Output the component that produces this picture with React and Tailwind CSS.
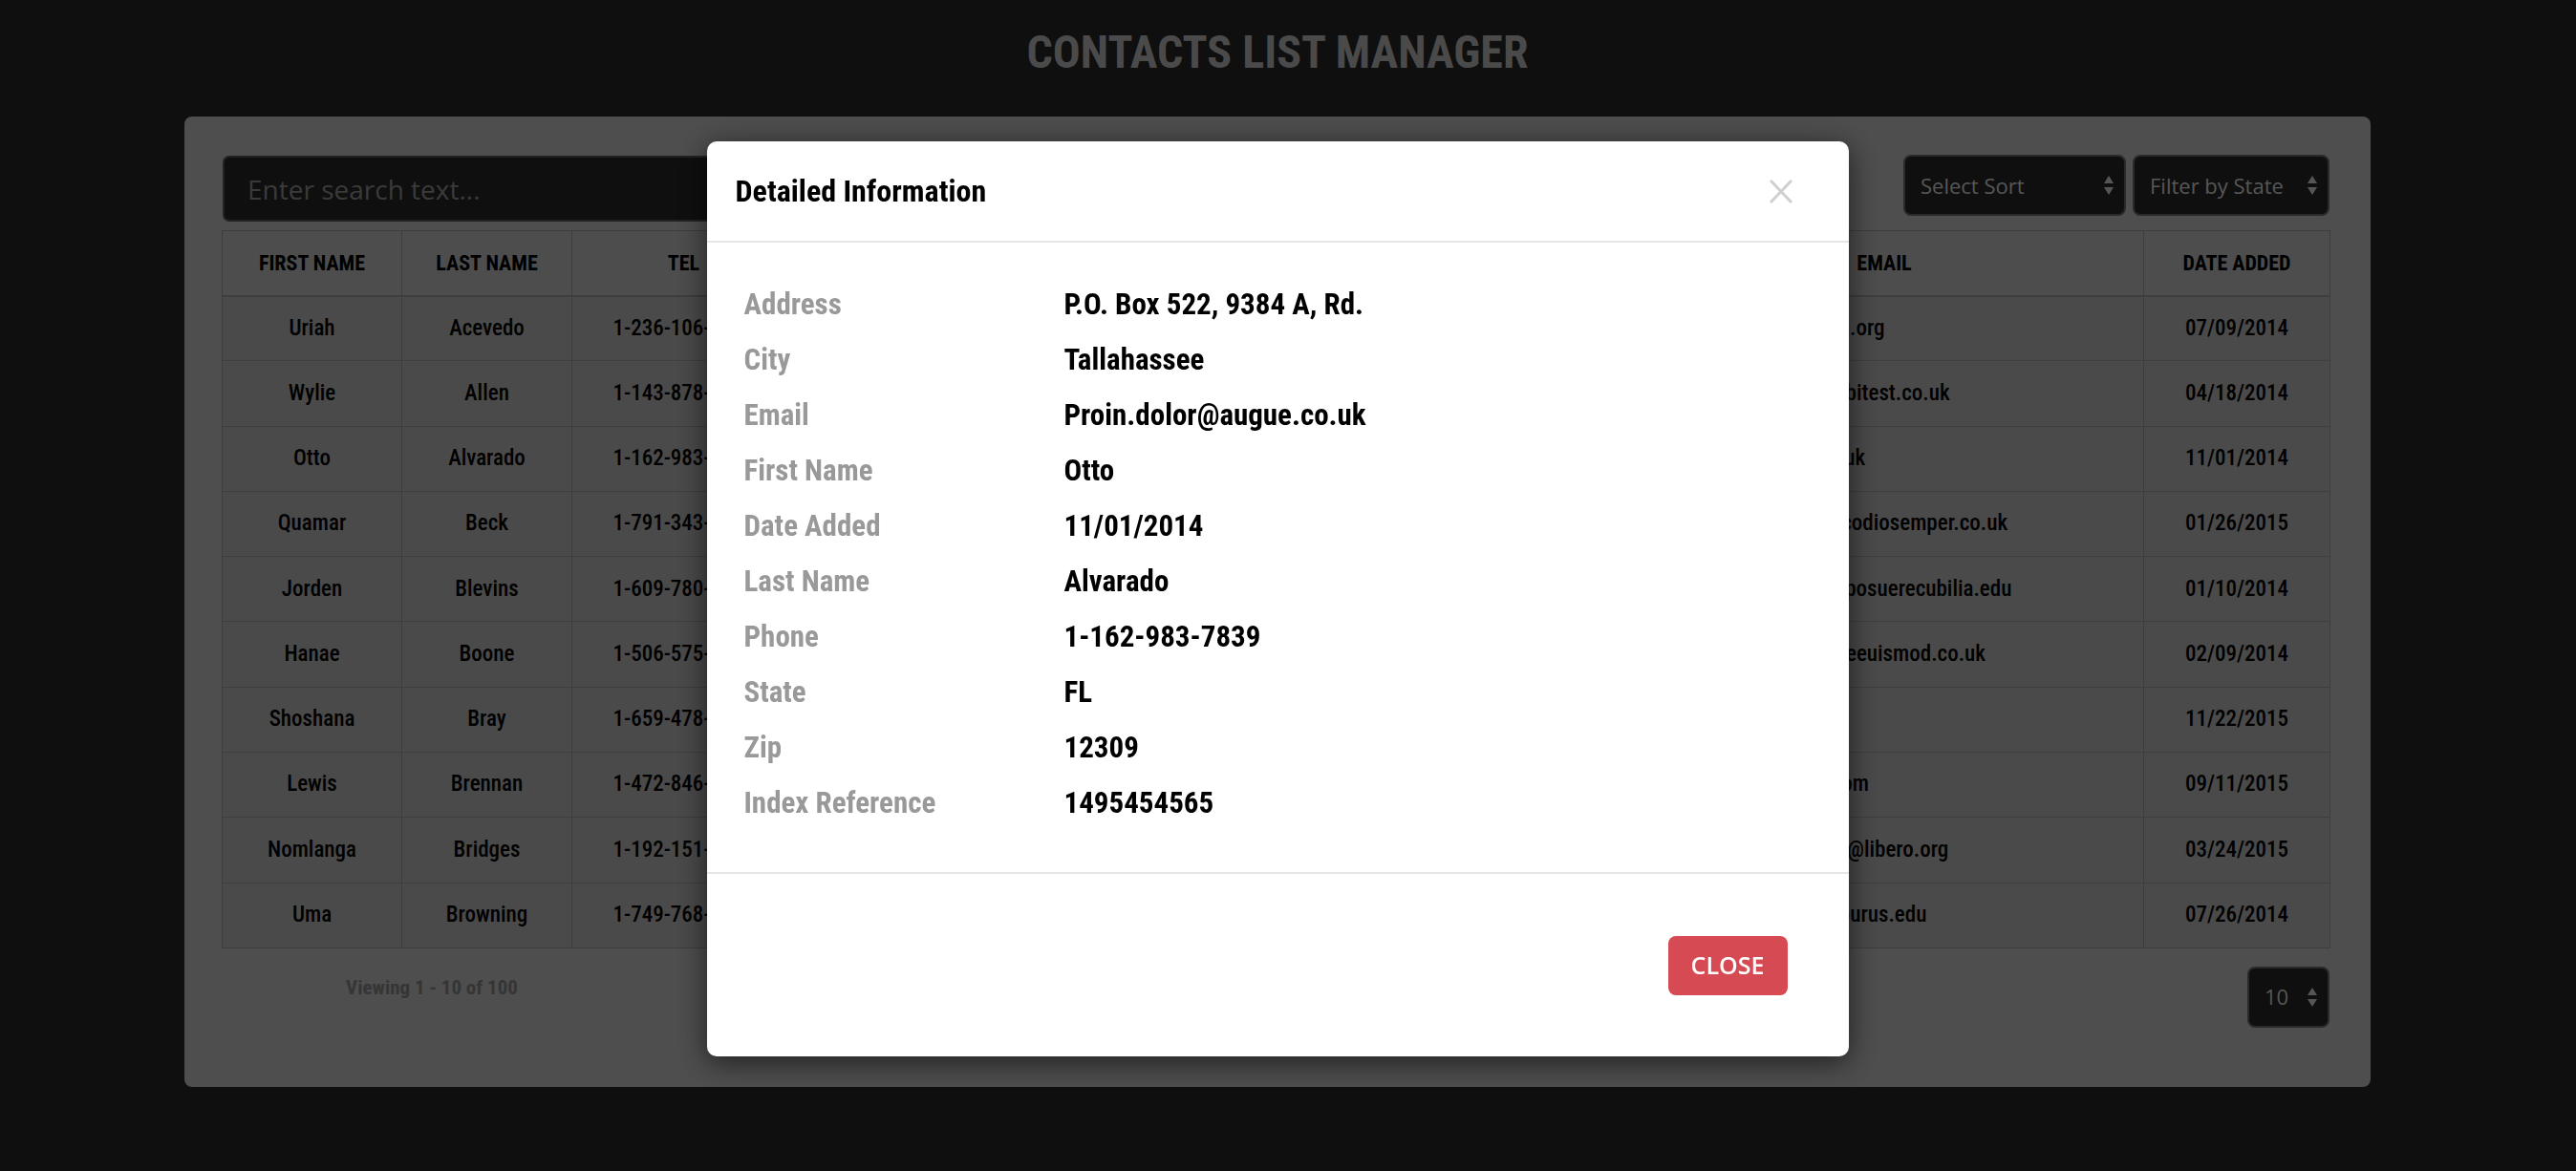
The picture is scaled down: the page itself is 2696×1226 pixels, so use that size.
import React from 'react';

const contacts = [
  { first: 'Uriah', last: 'Acevedo', tel: '1-236-106-2468', address: '8812 Sed Rd.', city: 'Topeka', state: 'KS', zip: '66403', email: 'dui.sit@Aeneanegestas.org', date: '07/09/2014' },
  { first: 'Wylie', last: 'Allen', tel: '1-143-878-0752', address: '4471 Mauris Ave', city: 'Augusta', state: 'GA', zip: '30907', email: 'Sed.malesuada.a@Morbitest.co.uk', date: '04/18/2014' },
  { first: 'Otto', last: 'Alvarado', tel: '1-162-983-7839', address: 'P.O. Box 522, 9384 A, Rd.', city: 'Tallahassee', state: 'FL', zip: '12309', email: 'Proin.dolor@augue.co.uk', date: '11/01/2014' },
  { first: 'Quamar', last: 'Beck', tel: '1-791-343-2114', address: '622 Nulla St.', city: 'Dover', state: 'DE', zip: '19901', email: 'risus.a.ultricies@Donecodiosemper.co.uk', date: '01/26/2015' },
  { first: 'Jorden', last: 'Blevins', tel: '1-609-780-5531', address: '1290 Vel Road', city: 'Trenton', state: 'NJ', zip: '08608', email: 'eleifend.vitae.mauris@posuerecubilia.edu', date: '01/10/2014' },
  { first: 'Hanae', last: 'Boone', tel: '1-506-575-9318', address: '741 Libero Av.', city: 'Boise', state: 'ID', zip: '83702', email: 'Curabitur.ut.odio@atqueeuismod.co.uk', date: '02/09/2014' },
  { first: 'Shoshana', last: 'Bray', tel: '1-659-478-5526', address: '305 Eget St.', city: 'Helena', state: 'MT', zip: '59601', email: 'nec.ligula@Sed.ca', date: '11/22/2015' },
  { first: 'Lewis', last: 'Brennan', tel: '1-472-846-3097', address: '9921 Ante Rd.', city: 'Salem', state: 'OR', zip: '97301', email: 'quis.pede@Curabitur.com', date: '09/11/2015' },
  { first: 'Nomlanga', last: 'Bridges', tel: '1-192-151-0684', address: '55 Magna Street', city: 'Austin', state: 'TX', zip: '73301', email: 'Aliquam.tincidunt.nunc@libero.org', date: '03/24/2015' },
  { first: 'Uma', last: 'Browning', tel: '1-749-768-0455', address: '180 Lorem Ave', city: 'Denver', state: 'CO', zip: '80202', email: 'mi.felis.at@adipiscingpurus.edu', date: '07/26/2014' },
];

const details = [
  ['Address', 'P.O. Box 522, 9384 A, Rd.'],
  ['City', 'Tallahassee'],
  ['Email', 'Proin.dolor@augue.co.uk'],
  ['First Name', 'Otto'],
  ['Date Added', '11/01/2014'],
  ['Last Name', 'Alvarado'],
  ['Phone', '1-162-983-7839'],
  ['State', 'FL'],
  ['Zip', '12309'],
  ['Index Reference', '1495454565'],
];

const Arrows = () => (
  <svg width="10" height="20" viewBox="0 0 10 20" fill="currentColor">
    <polygon points="0,8 5,0 10,8" />
    <polygon points="0,12 10,12 5,20" />
  </svg>
);

const FakeSelect = ({ label, className }) => (
  <div className={`h-[64px] rounded-[8px] bg-[#1e1e1e] border-2 border-[#555] flex items-center justify-between pl-[16px] pr-[11px] text-[#adadad] font-['Open_Sans',sans-serif] text-[22px] ${className}`}>
    <span>{label}</span>
    <Arrows />
  </div>
);

const App = () => {
  return (
    <div className="min-h-screen bg-[#1e1e1e] font-['Roboto_Condensed','Liberation_Sans_Narrow','DejaVu_Sans_Condensed',sans-serif]">
      <div className="pr-[22px]">
        <div className="w-[2288px] mx-auto pt-[31px] pb-[89px]">
          <h1 className="text-center text-[48px] leading-[48px] font-bold text-[#949494]">CONTACTS LIST MANAGER</h1>

          <div className="mt-[43px] bg-[#9c9c9c] rounded-[8px] pt-[40px] pl-[39px] pr-[43px] pb-[62px]">
            <div className="flex items-start justify-between">
              <input
                type="text"
                placeholder="Enter search text..."
                className="mt-[1px] ml-[1px] w-[1300px] h-[69px] rounded-[7px] bg-[#1e1e1e] border-2 border-[#444] px-[24px] text-[28px] text-[#ddd] placeholder:text-[#757575] font-['Open_Sans',sans-serif] outline-none"
              />
              <div className="flex gap-[7px]">
                <FakeSelect label="Select Sort" className="w-[233px]" />
                <FakeSelect label="Filter by State" className="w-[206px]" />
              </div>
            </div>

            <table className="mt-[9px] w-full table-fixed border-collapse border border-[#7c7c7c] text-black">
              <colgroup>
                <col className="w-[188px]" />
                <col className="w-[178px]" />
                <col className="w-[234px]" />
                <col className="w-[300px]" />
                <col className="w-[220px]" />
                <col className="w-[150px]" />
                <col className="w-[198px]" />
                <col className="w-[543px]" />
                <col className="w-[195px]" />
              </colgroup>
              <thead>
                <tr className="h-[68px] bg-[#9a9a9a] border-b-2 border-[#7c7c7c]">
                  {['First Name', 'Last Name', 'Tel', 'Address', 'City', 'State', 'Zip', 'Email', 'Date Added'].map((h) => (
                    <th key={h} className="border border-[#7c7c7c] text-center uppercase font-bold text-[22px]">{h}</th>
                  ))}
                </tr>
              </thead>
              <tbody className="text-[23px] font-medium">
                {contacts.map((c) => (
                  <tr key={c.first} className="h-[68.3px] bg-[#949494]">
                    <td className="border border-[#7c7c7c] text-center">{c.first}</td>
                    <td className="border border-[#7c7c7c] text-center">{c.last}</td>
                    <td className="border border-[#7c7c7c] text-center whitespace-nowrap overflow-hidden">{c.tel}</td>
                    <td className="border border-[#7c7c7c] text-center whitespace-nowrap overflow-hidden">{c.address}</td>
                    <td className="border border-[#7c7c7c] text-center">{c.city}</td>
                    <td className="border border-[#7c7c7c] text-center">{c.state}</td>
                    <td className="border border-[#7c7c7c] text-center">{c.zip}</td>
                    <td className="border border-[#7c7c7c] text-left pl-[19px] whitespace-nowrap overflow-hidden">{c.email}</td>
                    <td className="border border-[#7c7c7c] text-center">{c.date}</td>
                  </tr>
                ))}
              </tbody>
            </table>

            <div className="mt-[19px] flex items-start justify-between">
              <div className="w-[440px] mt-[7px] text-center text-[21px] leading-[30px] font-bold text-[#6b6b6b]">Viewing 1 - 10 of 100</div>
              <FakeSelect label="10" className="w-[86px] h-[63px]" />
            </div>
          </div>
        </div>
      </div>

      {/* modal */}
      <div className="fixed inset-0 bg-black/50 flex justify-center items-start pr-[22px]">
        <div className="mt-[148px] w-[1195px] bg-white rounded-[10px] shadow-[0_6px_30px_rgba(0,0,0,0.6)]">
          <div className="h-[106px] border-b-2 border-[#e5e5e5] flex items-center justify-between pl-[30px] pr-[59px]">
            <h2 className="text-[32px] font-bold text-black">Detailed Information</h2>
            <svg width="24" height="25" viewBox="0 0 24 25" stroke="#cfcfcf" strokeWidth="3">
              <line x1="1" y1="1" x2="23" y2="24" />
              <line x1="23" y1="1" x2="1" y2="24" />
            </svg>
          </div>
          <div className="pt-[36px] pb-[43px] pl-[39px] border-b-2 border-[#e5e5e5]">
            {details.map(([label, value]) => (
              <div key={label} className="flex h-[58px] leading-[58px] text-[31px] font-bold">
                <div className="w-[335px] text-[#999]">{label}</div>
                <div className="text-black">{value}</div>
              </div>
            ))}
          </div>
          <div className="h-[191px] flex items-center justify-end pr-[64px]">
            <button className="w-[125px] h-[62px] rounded-[8px] bg-[#d64b53] text-white text-[25px] font-semibold uppercase font-['Open_Sans',sans-serif]">Close</button>
          </div>
        </div>
      </div>
    </div>
  );
};

export default App;
